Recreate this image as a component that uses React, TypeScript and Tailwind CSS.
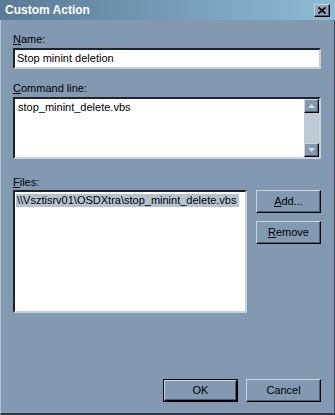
import React from 'react';

const raised =
  'border border-t-[#c9d5e1] border-l-[#c9d5e1] border-r-[#000000] border-b-[#000000] shadow-[inset_-1px_-1px_0_#4d5f73]';
const sunken =
  'border-2 border-t-[#1c232b] border-l-[#1c232b] border-r-[#c3cfdb] border-b-[#c3cfdb]';

function Button({ label, hot, isDefault = false, className = '' }: { label: string; hot?: number; isDefault?: boolean; className?: string }) {
  const text =
    hot === undefined ? (
      label
    ) : (
      <>
        {label.slice(0, hot)}
        <span className="underline underline-offset-[1px]">{label[hot]}</span>
        {label.slice(hot + 1)}
      </>
    );
  if (isDefault) {
    return (
      <div className={`border border-black ${className}`}>
        <div className={`${raised} w-full h-full flex items-center justify-center bg-[#8399b1] text-black`}>{text}</div>
      </div>
    );
  }
  return <div className={`${raised} flex items-center justify-center bg-[#8399b1] text-black ${className}`}>{text}</div>;
}

function ScrollArrow({ up }: { up: boolean }) {
  return (
    <div className={`${raised} w-[15px] h-[14px] bg-[#8399b1] flex items-center justify-center`}>
      <svg width="7" height="4" viewBox="0 0 7 4">
        {up ? <polygon points="3.5,0 7,4 0,4" fill="#d3dde7" /> : <polygon points="0,0 7,0 3.5,4" fill="#d3dde7" />}
      </svg>
    </div>
  );
}

export default function App() {
  return (
    <div className="w-[335px] h-[415px] flex flex-col bg-[#8399b1] text-[11px] leading-[13px] text-black font-['Liberation_Sans',Arial,sans-serif] overflow-hidden">
      {/* Title bar */}
      <div className="h-[20px] shrink-0 flex items-center justify-between pl-[5px] pr-[5px] bg-gradient-to-r from-[#5a7b97] to-[#8ebcd7]">
        <span className="text-white font-bold text-[12px]">Custom Action</span>
        <div className={`${raised} w-[16px] h-[13px] bg-[#8fa6bd] flex items-center justify-center`}>
          <svg width="8" height="7" viewBox="0 0 8 7">
            <path d="M0.5 0.5 L7.5 6.5 M7.5 0.5 L0.5 6.5" stroke="#000" strokeWidth="1.8" />
          </svg>
        </div>
      </div>

      {/* Body */}
      <div className="flex-1 flex flex-col border-l border-l-[#b3c2d1] border-r border-r-[#3c4a58] border-b-2 border-b-[#2e3a46] pl-[12px] pr-[13px] pt-[13px]">
        <div className="mb-[2px]">
          <span className="underline underline-offset-[1px]">N</span>ame:
        </div>
        <div className={`${sunken} h-[21px] bg-white flex items-center pl-[2px]`}>Stop minint deletion</div>

        <div className="mt-[13px] mb-[2px]">
          <span className="underline underline-offset-[1px]">C</span>ommand line:
        </div>
        <div className={`${sunken} h-[62px] bg-white flex`}>
          <div className="flex-1 pl-[3px] pt-[2px]">stop_minint_delete.vbs</div>
          <div className="w-[15px] flex flex-col justify-between bg-[#bccad6]">
            <ScrollArrow up />
            <ScrollArrow up={false} />
          </div>
        </div>

        <div className="mt-[17px] mb-[1px]">
          <span className="underline underline-offset-[1px]">F</span>iles:
        </div>
        <div className="flex gap-[9px]">
          <div className={`${sunken} w-[234px] h-[123px] bg-white p-[1px]`}>
            <span className="inline-block bg-[#b5c3d1] pl-[1px] pr-[3px] leading-[13px] mt-[1px]">
              \\Vsztisrv01\OSDXtra\stop_minint_delete.vbs
            </span>
          </div>
          <div className="flex flex-col gap-[8px]">
            <Button label="Add..." hot={0} className="w-[65px] h-[23px]" />
            <Button label="Remove" hot={0} className="w-[65px] h-[23px]" />
          </div>
        </div>

        <div className="mt-[66px] flex justify-end gap-[8px]">
          <Button label="OK" isDefault className="w-[75px] h-[23px]" />
          <Button label="Cancel" className="w-[75px] h-[23px]" />
        </div>
      </div>
    </div>
  );
}
